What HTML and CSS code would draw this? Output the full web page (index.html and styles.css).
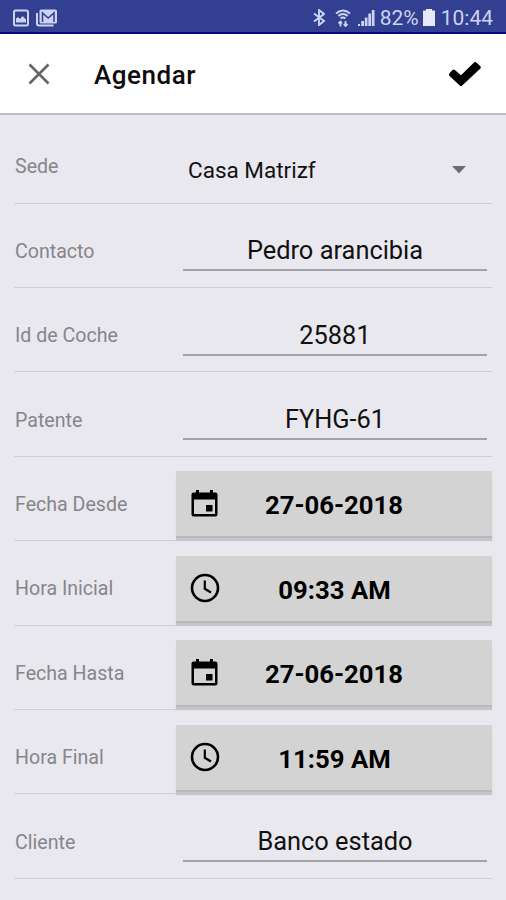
FILE: index.html
```
<!DOCTYPE html>
<html lang="es">
<head>
    <meta charset="UTF-8">
    <meta name="viewport" content="width=device-width, initial-scale=1.0">
    <title>Agendar</title>
    <link rel="stylesheet" href="styles.css">
</head>
<body>
    <svg class="sprite" width="0" height="0">
        <symbol id="calendar" viewBox="0 0 28 28">
            <path d="M5.500 0h3v2.500h11V0h3v2.500h2.500a2 2 0 0 1 2 2v20a2 2 0 0 1-2 2h-22a2 2 0 0 1-2-2V4.500a2 2 0 0 1 2-2h2.500zM3.500 9.500V24h21V9.500zM15.500 15h6.500v6.500h-6.500z" fill-rule="evenodd"/>
        </symbol>
        <symbol id="clock" viewBox="0 0 30 30">
            <circle cx="15" cy="15" r="13" fill="none" stroke="#000" stroke-width="2.600"/>
            <path d="M14.800 7.500v8.300l6.200 3.700" fill="none" stroke="#000" stroke-width="2.200"/>
        </symbol>
    </svg>

    <div class="status-bar">
        <div class="notifications">
            <svg width="16" height="18" viewBox="0 0 16 18">
                <rect x="1" y="1.500" width="14" height="15" rx="1.500" fill="none" stroke="#ccd3f3" stroke-width="2"/>
                <path d="M3 13.500V9.500l2-1.500 2 2 2.500-3 3.500 3.500V13.500z" fill="#ccd3f3"/>
            </svg>
            <svg width="22" height="18" viewBox="0 0 22 18">
                <path d="M1 4v10.500a2 2 0 0 0 2 2h14.500" fill="none" stroke="#ccd3f3" stroke-width="2"/>
                <rect x="3.500" y="0.500" width="17.500" height="14" rx="1.500" fill="#ccd3f3"/>
                <path d="M6.500 13V4l5.700 5L18 4v9" fill="none" stroke="#333f91" stroke-width="1.500"/>
            </svg>
        </div>
        <div class="system">
            <svg class="bluetooth" width="12" height="17" viewBox="0 0 12 17">
                <path d="M1 4.500l10 7.500-5 4V1l5 4-10 7.500" fill="none" stroke="#ccd3f3" stroke-width="1.900"/>
            </svg>
            <svg class="wifi" width="16" height="18" viewBox="0 0 16 18">
                <path d="M1 4.500q7-6 14 0M3.300 7q4.700-4 9.400 0M5.600 9.500q2.400-2 4.800 0" fill="none" stroke="#ccd3f3" stroke-width="2"/>
                <path d="M5.500 17.500v-4M3.500 14.500l2-2 1.500 2M10.500 12v4M8.700 15l1.800 2 2-2" fill="none" stroke="#ccd3f3" stroke-width="1.800"/>
            </svg>
            <svg class="signal" width="18" height="18" viewBox="0 0 18 18">
                <path d="M1 15h2v2H1zM4.200 12H7v5H4.200zM7.800 8.500h2.700V17H7.800zM11.300 4.500H14V17h-2.700zM14.800 1h2.700v16h-2.700z" fill="#ccd3f3"/>
            </svg>
            <span class="percent">82%</span>
            <svg class="battery" width="12" height="17" viewBox="0 0 12 17">
                <path d="M3 0h6v1.500h3V17H0V1.500h3z" fill="#e6e9fa"/>
            </svg>
            <span class="time">10:44</span>
        </div>
    </div>

    <header class="toolbar">
        <svg class="close" width="22" height="22" viewBox="0 0 22 22">
            <path d="M1.500 1.500l19 19M20.500 1.500l-19 19" stroke="#656565" stroke-width="2.600"/>
        </svg>
        <h1>Agendar</h1>
        <svg class="accept" width="34" height="26" viewBox="0 0 34 26">
            <path d="M1.300 12.500l3.200-3.600q1.200-1 2.400 0l6.100 5.300L26 1.600q1.200-1 2.400 0l4 3.600q1 1.100 0 2.200L14.200 24.600q-1.200 1-2.400 0L1.300 14.700q-1-1.100 0-2.200z"/>
        </svg>
    </header>

    <main class="form">
        <div class="row">
            <span class="label">Sede</span>
            <div class="select">
                <span>Casa Matrizf</span>
                <svg width="14" height="8" viewBox="0 0 14 8"><path d="M0 0h14L7 7.500z" fill="#6c6c6e"/></svg>
            </div>
        </div>
        <div class="row">
            <span class="label">Contacto</span>
            <div class="input">Pedro arancibia</div>
        </div>
        <div class="row">
            <span class="label">Id de Coche</span>
            <div class="input">25881</div>
        </div>
        <div class="row">
            <span class="label">Patente</span>
            <div class="input">FYHG-61</div>
        </div>
        <div class="row">
            <span class="label">Fecha Desde</span>
            <button class="picker"><svg class="icon-calendar"><use href="#calendar"/></svg><span>27-06-2018</span></button>
        </div>
        <div class="row">
            <span class="label">Hora Inicial</span>
            <button class="picker"><svg class="icon-clock"><use href="#clock"/></svg><span>09:33 AM</span></button>
        </div>
        <div class="row">
            <span class="label">Fecha Hasta</span>
            <button class="picker"><svg class="icon-calendar"><use href="#calendar"/></svg><span>27-06-2018</span></button>
        </div>
        <div class="row">
            <span class="label">Hora Final</span>
            <button class="picker"><svg class="icon-clock"><use href="#clock"/></svg><span>11:59 AM</span></button>
        </div>
        <div class="row">
            <span class="label">Cliente</span>
            <div class="input">Banco estado</div>
        </div>
    </main>
</body>
</html>
```

FILE: styles.css
```
* {
    box-sizing: border-box;
}
body {
    margin: 0;
    height: 900px;
    overflow: hidden;
    background: #e9e8ee;
    font-family: Roboto, sans-serif;
    color: #111;
}
svg {
    display: block;
    flex-shrink: 0;
}
.sprite {
    position: absolute;
}
.status-bar {
    display: flex;
    justify-content: space-between;
    height: 34px;
    padding: 0 13px 0 13px;
    background: #333f91;
    border-bottom: 2px solid #08087c;
    color: #ccd3f3;
    font-size: 21px;
}
.notifications {
    display: flex;
    gap: 7px;
    padding-top: 9px;
}
.system {
    display: flex;
    align-items: center;
    padding-top: 3px;
}
.wifi {
    margin-left: 10px;
}
.signal {
    margin-left: 6px;
}
.percent {
    margin-left: 5px;
}
.battery {
    margin: 0 6px 0 4px;
}
.toolbar {
    display: flex;
    align-items: center;
    height: 81px;
    padding: 0 24px 0 28px;
    background: #fff;
    border-bottom: 2px solid #bcbdc2;
}
.accept {
    margin-top: 1px;
}
h1 {
    flex: 1;
    margin: 3px 0 0 44px;
    font-size: 26px;
    font-weight: 500;
    letter-spacing: 0.55px;
    color: #0c0c0c;
}
.form {
    padding: 4.2px 14px 0;
}
.row {
    display: flex;
    align-items: center;
    height: 84.4px;
    border-bottom: 1px solid #cecdd4;
}
.label {
    width: 162px;
    padding: 12px 0 0 1px;
    font-size: 19.6px;
    color: #86858a;
}
.input {
    flex: 1;
    height: 47px;
    margin: 5px 5px 0 7px;
    border-bottom: 2px solid #a3a2a8;
    line-height: 52px;
    font-size: 25.4px;
    text-align: center;
}
.select {
    display: flex;
    align-items: center;
    justify-content: space-between;
    flex: 1;
    padding: 18px 26px 0 12px;
    font-size: 22.5px;
}
.select span {
    padding-top: 1px;
}
.picker {
    display: flex;
    align-items: center;
    flex: 1;
    height: 65px;
    margin-top: 11px;
    padding: 0 14px;
    border: none;
    background: #d3d3d3;
    box-shadow: 0 2px 0 #b9b9bc, 0 5px 1px #c6c6ca;
    font-family: inherit;
    font-size: 25.7px;
    font-weight: 700;
    color: #000;
}
.picker span {
    flex: 1;
    padding: 3px 29px 0 0;
}
.icon-calendar {
    width: 29px;
    height: 28px;
}
.icon-clock {
    width: 30px;
    height: 30px;
}
```
